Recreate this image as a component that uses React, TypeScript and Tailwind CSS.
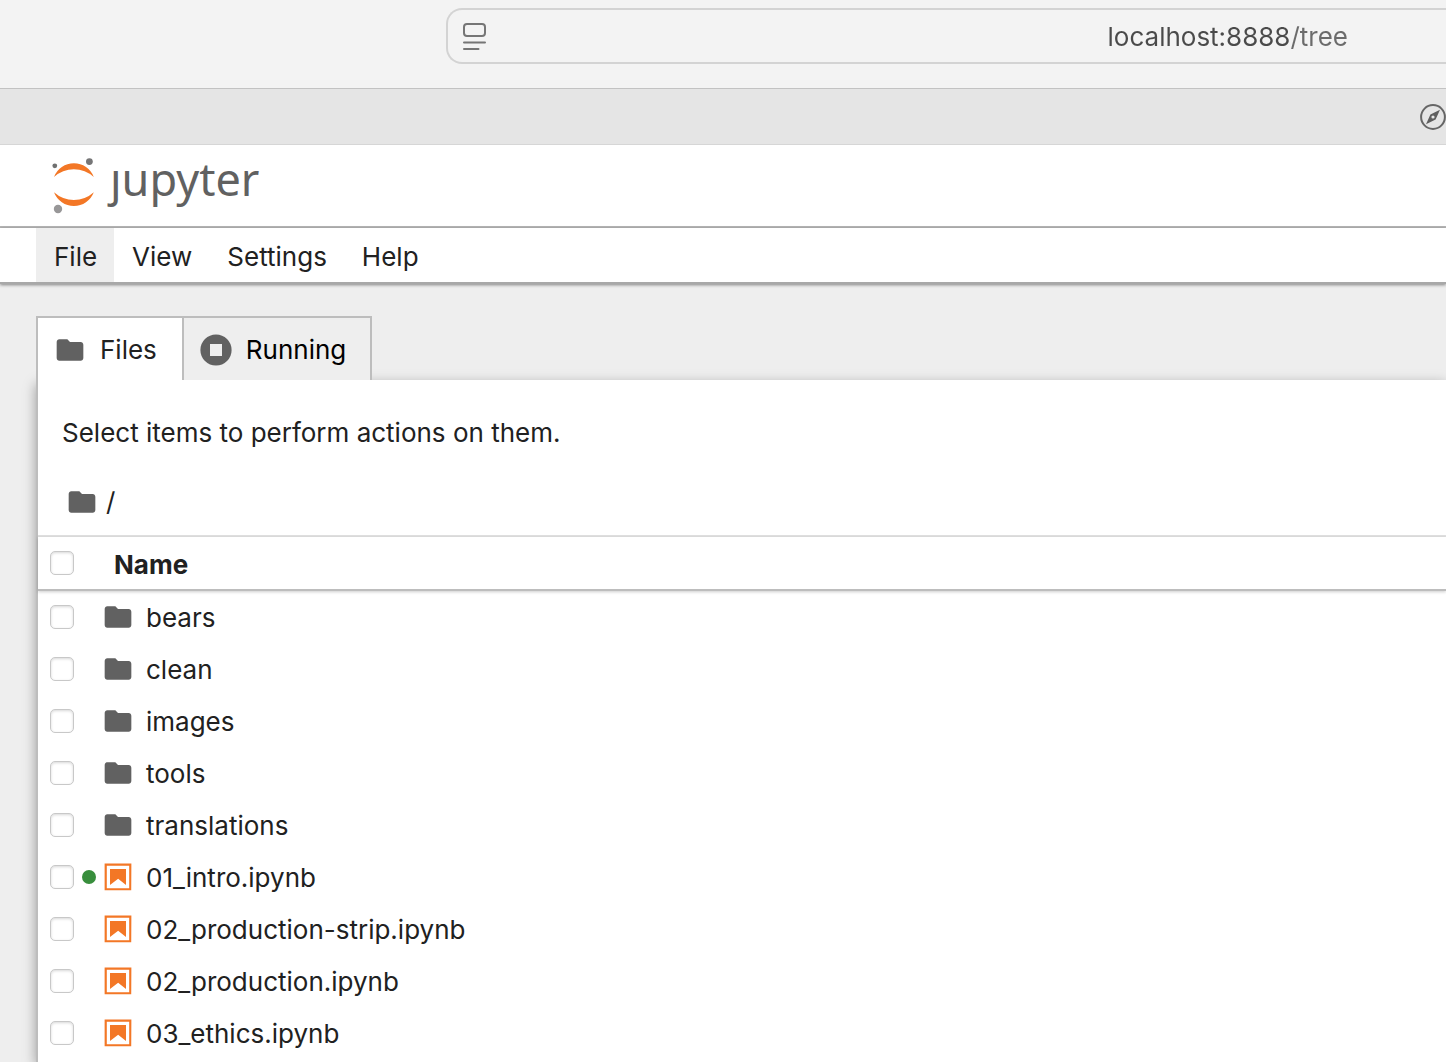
import React from "react";

type Entry = { name: string; kind: "folder" | "notebook"; running?: boolean };

const entries: Entry[] = [
  { name: "bears", kind: "folder" },
  { name: "clean", kind: "folder" },
  { name: "images", kind: "folder" },
  { name: "tools", kind: "folder" },
  { name: "translations", kind: "folder" },
  { name: "01_intro.ipynb", kind: "notebook", running: true },
  { name: "02_production-strip.ipynb", kind: "notebook" },
  { name: "02_production.ipynb", kind: "notebook" },
  { name: "03_ethics.ipynb", kind: "notebook" },
];

function FolderIcon() {
  return (
    <svg className="size-8 shrink-0" viewBox="0 0 24 24" fill="#616161" aria-hidden="true">
      <path d="M10 4H4c-1.1 0-1.99.9-1.99 2L2 18c0 1.1.9 2 2 2h16c1.1 0 2-.9 2-2V8c0-1.1-.9-2-2-2h-8l-2-2z" />
    </svg>
  );
}

function NotebookIcon() {
  return (
    <svg className="size-8 shrink-0" viewBox="0 0 22 22" fill="#f37726" aria-hidden="true">
      <path d="M18.7 3.3v15.4H3.3V3.3h15.4m1.5-1.5H1.8v18.3h18.3l.1-18.3z" />
      <path d="M16.5 16.5l-5.4-4.3-5.6 4.3v-11h11z" />
    </svg>
  );
}

function StopIcon() {
  return (
    <svg className="size-8 shrink-0" viewBox="0 0 32 32" aria-hidden="true">
      <circle cx="16" cy="16" r="15.6" fill="#616161" />
      <rect x="10" y="10" width="12" height="12" fill="#eeeeee" />
    </svg>
  );
}

function PageMenuIcon() {
  return (
    <svg width="24" height="28" viewBox="0 0 24 28" fill="none" stroke="#757575" strokeWidth="2" strokeLinecap="round" aria-hidden="true">
      <rect x="2" y="2" width="21" height="12" rx="3" />
      <path d="M2 20.5h21M2 27h14.5" />
    </svg>
  );
}

function CompassIcon() {
  return (
    <svg width="26" height="26" viewBox="0 0 26 26" aria-hidden="true">
      <circle cx="13" cy="13" r="11.9" fill="none" stroke="#666666" strokeWidth="2" />
      <path fillRule="evenodd" fill="#5e5e5e" d="M20 5.8 15.6 15.4 6 20.2 10.4 10.6zM13 11.4a1.6 1.6 0 1 0 0 3.2 1.6 1.6 0 0 0 0-3.2z" />
    </svg>
  );
}

function JupyterMark() {
  return (
    <svg width="48" height="60" viewBox="0 0 48 60" aria-hidden="true">
      <path fill="#f37726" d="M4 21A21.3 21.3 0 0 1 43.8 21A29.5 29.5 0 0 0 4 21z" />
      <path fill="#f37726" d="M4 36.2A21.3 21.3 0 0 0 43.8 36.2A29.5 29.5 0 0 1 4 36.2z" />
      <circle cx="4.8" cy="9.8" r="2.4" fill="#6f7070" />
      <circle cx="39.4" cy="5.6" r="3.4" fill="#767677" />
      <circle cx="8" cy="53" r="4.2" fill="#989798" />
    </svg>
  );
}

function CheckBox({ label }: { label: string }) {
  return (
    <input
      type="checkbox"
      aria-label={label}
      className="size-6 shrink-0 appearance-none rounded-[5px] border border-[#c8c8c8] bg-white shadow-[inset_0_1px_3px_rgba(0,0,0,0.16)] checked:bg-[#f37726]"
    />
  );
}

export default function App() {
  return (
    <div className="flex min-h-screen flex-col overflow-hidden bg-[#eeeeee] font-['Inter',sans-serif] text-[26px] leading-8 text-[#212121]">
      <div className="flex h-[89px] shrink-0 items-start border-b border-[#c2c2c2] bg-[#f3f3f3] pt-2">
        <div className="ml-[446px] flex h-14 flex-1 items-center rounded-l-2xl border-2 border-r-0 border-[#d3d3d3] pl-3">
          <button type="button" aria-label="Page menu" className="px-0.5">
            <PageMenuIcon />
          </button>
          <input
            type="text"
            aria-label="Address"
            defaultValue="localhost:8888/tree"
            className="h-10 min-w-0 flex-1 bg-[linear-gradient(to_right,#4a4a4a_calc(100%_-_155px),#6b6b6b_calc(100%_-_155px))] bg-clip-text pr-[98px] text-right text-transparent outline-none"
          />
        </div>
      </div>

      <div className="flex h-14 shrink-0 items-center justify-end border-b border-[#d6d6d6] bg-[#e5e5e5]">
        <CompassIcon />
      </div>

      <header className="flex h-[83px] shrink-0 items-center border-b-2 border-[#b6b6b6] bg-white pl-[50px]">
        <a href="#" aria-label="jupyter" className="flex items-center gap-3">
          <JupyterMark />
          <span className="pb-3.5 font-['Noto_Sans',sans-serif] text-[45px] leading-[52px] text-[#616161]">ȷupyter</span>
        </a>
      </header>

      <nav className="z-10 flex h-14 shrink-0 border-b-2 border-[#a8a8a8] bg-white pl-9 shadow-[0_1px_3px_rgba(0,0,0,0.45)]">
        <button type="button" className="bg-[#eeeeee] pl-[18px] pr-[17px] pt-1">File</button>
        <button type="button" className="pl-[18px] pr-[17px] pt-1">View</button>
        <button type="button" className="pl-[18px] pr-[17px] pt-1">Settings</button>
        <button type="button" className="pl-[18px] pr-[17px] pt-1">Help</button>
      </nav>

      <main className="flex flex-1 flex-col pl-9 pt-8">
        <div role="tablist" className="relative z-10 flex h-16">
          <button type="button" role="tab" aria-selected="true" className="flex items-center gap-3.5 border-l-2 border-t-2 border-[#bdbdbd] bg-white pl-4 pr-[25px] pt-0.5">
            <FolderIcon />
            Files
          </button>
          <button type="button" role="tab" aria-selected="false" className="flex items-center gap-3.5 border-x-2 border-t-2 border-[#bdbdbd] bg-[#eeeeee] pl-4 pr-6 pt-0.5 text-black">
            <StopIcon />
            Running
          </button>
        </div>

        <section className="flex-1 border-l-2 border-[#bdbdbd] bg-white shadow-[0_4px_12px_rgba(0,0,0,0.35)]">
          <p className="pl-6 pt-[37px]">Select items to perform actions on them.</p>
          <div className="flex h-[88px] items-center gap-2 border-b-2 border-[#e0e0e0] pl-7 pt-5">
            <FolderIcon />
            <a href="#">/</a>
          </div>
          <table className="w-full border-separate border-spacing-0 text-left">
            <thead>
              <tr className="h-[54px] shadow-[0_1px_3px_rgba(0,0,0,0.2)]">
                <th className="w-16 border-b-2 border-[#bdbdbd] pl-3">
                  <span className="flex items-center"><CheckBox label="Select all files and directories" /></span>
                </th>
                <th className="border-b-2 border-[#bdbdbd] pl-3 pt-1 font-bold">Name</th>
              </tr>
            </thead>
            <tbody>
              {entries.map((e) => (
                <tr key={e.name} className="h-[52px]">
                  <td className="w-16 pl-3">
                    <span className="flex items-center gap-2">
                      <CheckBox label={"Select " + e.name} />
                      {e.running && <span className="size-[14px] rounded-full bg-[#388e3c]" />}
                    </span>
                  </td>
                  <td>
                    <a href="#" className="flex items-center gap-3">
                      {e.kind === "folder" ? <FolderIcon /> : <NotebookIcon />}
                      <span className="pt-0.5">{e.name}</span>
                    </a>
                  </td>
                </tr>
              ))}
            </tbody>
          </table>
        </section>
      </main>
    </div>
  );
}
